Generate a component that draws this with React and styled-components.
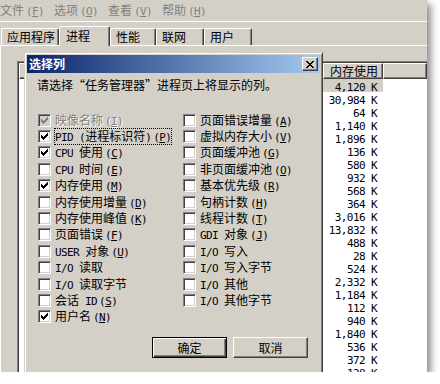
import React from "react";
import styled, { createGlobalStyle } from "styled-components";

const FACE = "#d4d0c8";
const SHADOW = "#808080";
const DARK = "#404040";

const GlobalStyle = createGlobalStyle`
  html, body {
    margin: 0;
    padding: 0;
    background: #ffffff;
  }
  body {
    font-family: "Noto Sans CJK SC", "Liberation Sans", sans-serif;
    font-size: 12px;
    color: #000;
  }
`;

const Window = styled.div`
  position: relative;
  width: 427px;
  height: 372px;
  background: ${FACE};
  box-shadow: 4px 4px 7px rgba(0, 0, 0, 0.45);
  overflow: hidden;
  display: flex;
  flex-direction: column;
`;

const MenuBar = styled.div`
  display: flex;
  align-items: center;
  height: 21px;
  flex-shrink: 0;
  border-bottom: 1px solid #fff;
`;

const MenuItem = styled.span`
  width: 54px;
  color: ${SHADOW};
  line-height: 14px;
  white-space: nowrap;
`;

const TabStrip = styled.div`
  display: flex;
  align-items: flex-end;
  height: 23px;
  padding-left: 1px;
  flex-shrink: 0;
  position: relative;
  z-index: 1;
`;

const Tab = styled.div`
  box-sizing: border-box;
  width: ${({ $w }) => $w}px;
  height: ${({ $active }) => ($active ? 20 : 17)}px;
  margin-bottom: ${({ $active }) => ($active ? -1 : 0)}px;
  padding-left: ${({ $active }) => ($active ? 6 : 5)}px;
  padding-bottom: ${({ $active }) => ($active ? 2 : 0)}px;
  display: flex;
  align-items: center;
  background: ${FACE};
  border-top: 1px solid #fff;
  border-left: 1px solid #fff;
  border-right: 1px solid ${DARK};
  border-radius: 2px 2px 0 0;
  box-shadow: inset -1px 0 ${SHADOW};
  white-space: nowrap;
  line-height: 14px;
`;

const Panel = styled.div`
  flex: 1;
  display: flex;
  min-height: 0;
  border-top: 1px solid #fff;
  border-left: 1px solid #fff;
  padding: 15px 0 0 16px;
`;

const ListView = styled.div`
  flex: 1;
  background: #fff;
  border-top: 1px solid ${SHADOW};
  border-left: 1px solid ${SHADOW};
  box-shadow: inset 1px 1px ${DARK};
  padding: 1px 0 0 1px;
  display: flex;
  flex-direction: column;
`;

const Columns = styled.div`
  display: grid;
  grid-template-columns: 304px 60px 1fr;
`;

const HeaderCell = styled.div`
  box-sizing: border-box;
  height: 16px;
  padding-left: 6px;
  background: ${FACE};
  border-top: 1px solid #fff;
  border-left: 1px solid #fff;
  border-right: 1px solid ${DARK};
  border-bottom: 1px solid ${DARK};
  box-shadow: inset -1px -1px ${SHADOW};
  line-height: 14px;
  white-space: nowrap;
`;

const Cell = styled.div`
  height: 13px;
  line-height: 13px;
  text-align: right;
  padding-right: 6px;
  background: ${({ $selected }) => ($selected ? FACE : "transparent")};
`;

const Latin = styled.span`
  font-family: "DejaVu Sans Mono", "Liberation Mono", monospace;
  font-size: 11px;
  letter-spacing: -0.6px;
`;

const Mnemonic = styled(Latin)`
  margin-left: 2px;

  u {
    text-underline-offset: 1px;
  }
`;

const Dialog = styled.div`
  position: absolute;
  left: 24px;
  top: 52px;
  width: 299px;
  height: 330px;
  box-sizing: border-box;
  padding: 2px;
  background: ${FACE};
  border: 1px solid;
  border-color: ${FACE} ${DARK} ${DARK} ${FACE};
  box-shadow: inset 1px 1px #fff, inset -1px -1px ${SHADOW};
  display: flex;
  flex-direction: column;
`;

const TitleBar = styled.div`
  height: 18px;
  display: flex;
  align-items: center;
  justify-content: space-between;
  padding-left: 2px;
  background: linear-gradient(to right, #0a246a, #a6caf0);
  color: #fff;
  font-weight: bold;
  line-height: 14px;
`;

const CloseButton = styled.div`
  box-sizing: border-box;
  width: 16px;
  height: 14px;
  margin-right: 2px;
  display: flex;
  align-items: center;
  justify-content: center;
  background: ${FACE};
  border: 1px solid;
  border-color: #fff ${DARK} ${DARK} #fff;
  box-shadow: inset -1px -1px ${SHADOW};
`;

const Body = styled.div`
  padding: 5px 0 0 10px;
  display: flex;
  flex-direction: column;
`;

const Prompt = styled.div`
  line-height: 14px;
  white-space: nowrap;
`;

const OptionGrid = styled.div`
  margin-top: 20px;
  margin-left: 1px;
  display: grid;
  grid-template-columns: 145px 1fr;
  grid-template-rows: repeat(13, 16.4px);
  grid-auto-flow: column;
`;

const OptionRow = styled.div`
  display: flex;
  align-items: center;
  gap: 4px;
  white-space: nowrap;
`;

const Box = styled.div`
  box-sizing: border-box;
  width: 13px;
  height: 13px;
  flex-shrink: 0;
  display: flex;
  align-items: center;
  justify-content: center;
  background: ${({ $disabled }) => ($disabled ? FACE : "#fff")};
  border: 1px solid;
  border-color: ${SHADOW} #fff #fff ${SHADOW};
  box-shadow: inset 1px 1px ${DARK}, inset -1px -1px ${FACE};
`;

const Label = styled.span`
  line-height: 13px;
  color: ${({ $disabled }) => ($disabled ? SHADOW : "#000")};
  text-shadow: ${({ $disabled }) => ($disabled ? "1px 1px #fff" : "none")};
  border: 1px dotted ${({ $focus }) => ($focus ? "#000" : "transparent")};
  margin-left: -1px;
`;

const ButtonRow = styled.div`
  margin-top: 12px;
  padding-right: 12px;
  display: flex;
  justify-content: flex-end;
  gap: 6px;
`;

const Button = styled.div`
  box-sizing: border-box;
  width: 75px;
  height: 21px;
  display: flex;
  align-items: center;
  justify-content: center;
  background: ${FACE};
  border: 1px solid;
  border-color: ${({ $default }) =>
    $default ? "#000" : `#fff ${DARK} ${DARK} #fff`};
  box-shadow: ${({ $default }) =>
    $default
      ? `inset 1px 1px #fff, inset -1px -1px ${DARK}, inset -2px -2px ${SHADOW}`
      : `inset -1px -1px ${SHADOW}`};
  line-height: 14px;
`;

// pixel bitmaps for the tiny system glyphs
const CHECK = [
  "......#",
  ".....##",
  "#...###",
  "##.###.",
  "#####..",
  ".###...",
  "..#....",
];

const CLOSE = [
  "##....##",
  ".##..##.",
  "..####..",
  "...##...",
  "..####..",
  ".##..##.",
  "##....##",
];

const Bitmap = ({ rows, color }) => (
  <svg
    width={rows[0].length}
    height={rows.length}
    shapeRendering="crispEdges"
  >
    {rows.flatMap((row, y) =>
      row
        .split("")
        .map((c, x) =>
          c === "#" ? (
            <rect key={`${x}-${y}`} x={x} y={y} width="1" height="1" fill={color} />
          ) : null
        )
    )}
  </svg>
);

// ascii runs use the narrow mono face, like the old bitmap font
const Mixed = ({ text }) =>
  text
    .split(/([\x00-\x7F]+)/)
    .filter(Boolean)
    .map((part, i) =>
      /^[\x00-\x7F]+$/.test(part) ? (
        <Latin key={i}>{part}</Latin>
      ) : (
        <span key={i}>{part}</span>
      )
    );

const Key = ({ k }) =>
  k ? (
    <Mnemonic>
      (<u>{k}</u>)
    </Mnemonic>
  ) : null;

const menus = [
  ["文件", "F"],
  ["选项", "O"],
  ["查看", "V"],
  ["帮助", "H"],
];

const tabs = [
  { name: "应用程序", w: 58 },
  { name: "进程", w: 51, active: true },
  { name: "性能", w: 46 },
  { name: "联网", w: 48 },
  { name: "用户", w: 48 },
];

const memory = [
  "4,120", "30,984", "64", "1,140", "1,896", "136", "580", "932",
  "568", "364", "3,016", "13,832", "488", "28", "524", "2,332",
  "1,184", "112", "940", "1,840", "536", "372", "128",
];

const options = [
  { label: "映像名称", k: "I", checked: true, disabled: true },
  { label: "PID (进程标识符)", k: "P", checked: true, focus: true },
  { label: "CPU 使用", k: "C", checked: true },
  { label: "CPU 时间", k: "E" },
  { label: "内存使用", k: "M", checked: true },
  { label: "内存使用增量", k: "D" },
  { label: "内存使用峰值", k: "K" },
  { label: "页面错误", k: "F" },
  { label: "USER 对象", k: "U" },
  { label: "I/O 读取" },
  { label: "I/O 读取字节" },
  { label: "会话 ID", k: "S" },
  { label: "用户名", k: "N", checked: true },
  { label: "页面错误增量", k: "A" },
  { label: "虚拟内存大小", k: "V" },
  { label: "页面缓冲池", k: "G" },
  { label: "非页面缓冲池", k: "O" },
  { label: "基本优先级", k: "R" },
  { label: "句柄计数", k: "H" },
  { label: "线程计数", k: "T" },
  { label: "GDI 对象", k: "J" },
  { label: "I/O 写入" },
  { label: "I/O 写入字节" },
  { label: "I/O 其他" },
  { label: "I/O 其他字节" },
];

const Option = ({ label, k, checked, disabled, focus }) => (
  <OptionRow>
    <Box $disabled={disabled}>
      {checked && <Bitmap rows={CHECK} color={disabled ? SHADOW : "#000"} />}
    </Box>
    <Label $disabled={disabled} $focus={focus}>
      <Mixed text={label} />
      <Key k={k} />
    </Label>
  </OptionRow>
);

const App = () => (
  <>
    <GlobalStyle />
    <Window>
      <MenuBar>
        {menus.map(([name, k]) => (
          <MenuItem key={name}>
            {name}
            <Key k={k} />
          </MenuItem>
        ))}
      </MenuBar>

      <TabStrip>
        {tabs.map((tab) => (
          <Tab key={tab.name} $w={tab.w} $active={tab.active}>
            {tab.name}
          </Tab>
        ))}
      </TabStrip>

      <Panel>
        <ListView>
          <Columns>
            <HeaderCell />
            <HeaderCell>内存使用</HeaderCell>
            <HeaderCell />
          </Columns>
          {memory.map((value, i) => (
            <Columns key={i}>
              <Cell />
              <Cell $selected={i === 0}>
                <Latin>{value} K</Latin>
              </Cell>
              <Cell />
            </Columns>
          ))}
        </ListView>
      </Panel>

      <Dialog>
        <TitleBar>
          <span>选择列</span>
          <CloseButton>
            <Bitmap rows={CLOSE} color="#000" />
          </CloseButton>
        </TitleBar>
        <Body>
          <Prompt>请选择“任务管理器”进程页上将显示的列。</Prompt>
          <OptionGrid>
            {options.map((opt) => (
              <Option key={opt.label} {...opt} />
            ))}
          </OptionGrid>
          <ButtonRow>
            <Button $default>确定</Button>
            <Button>取消</Button>
          </ButtonRow>
        </Body>
      </Dialog>
    </Window>
  </>
);

export default App;
